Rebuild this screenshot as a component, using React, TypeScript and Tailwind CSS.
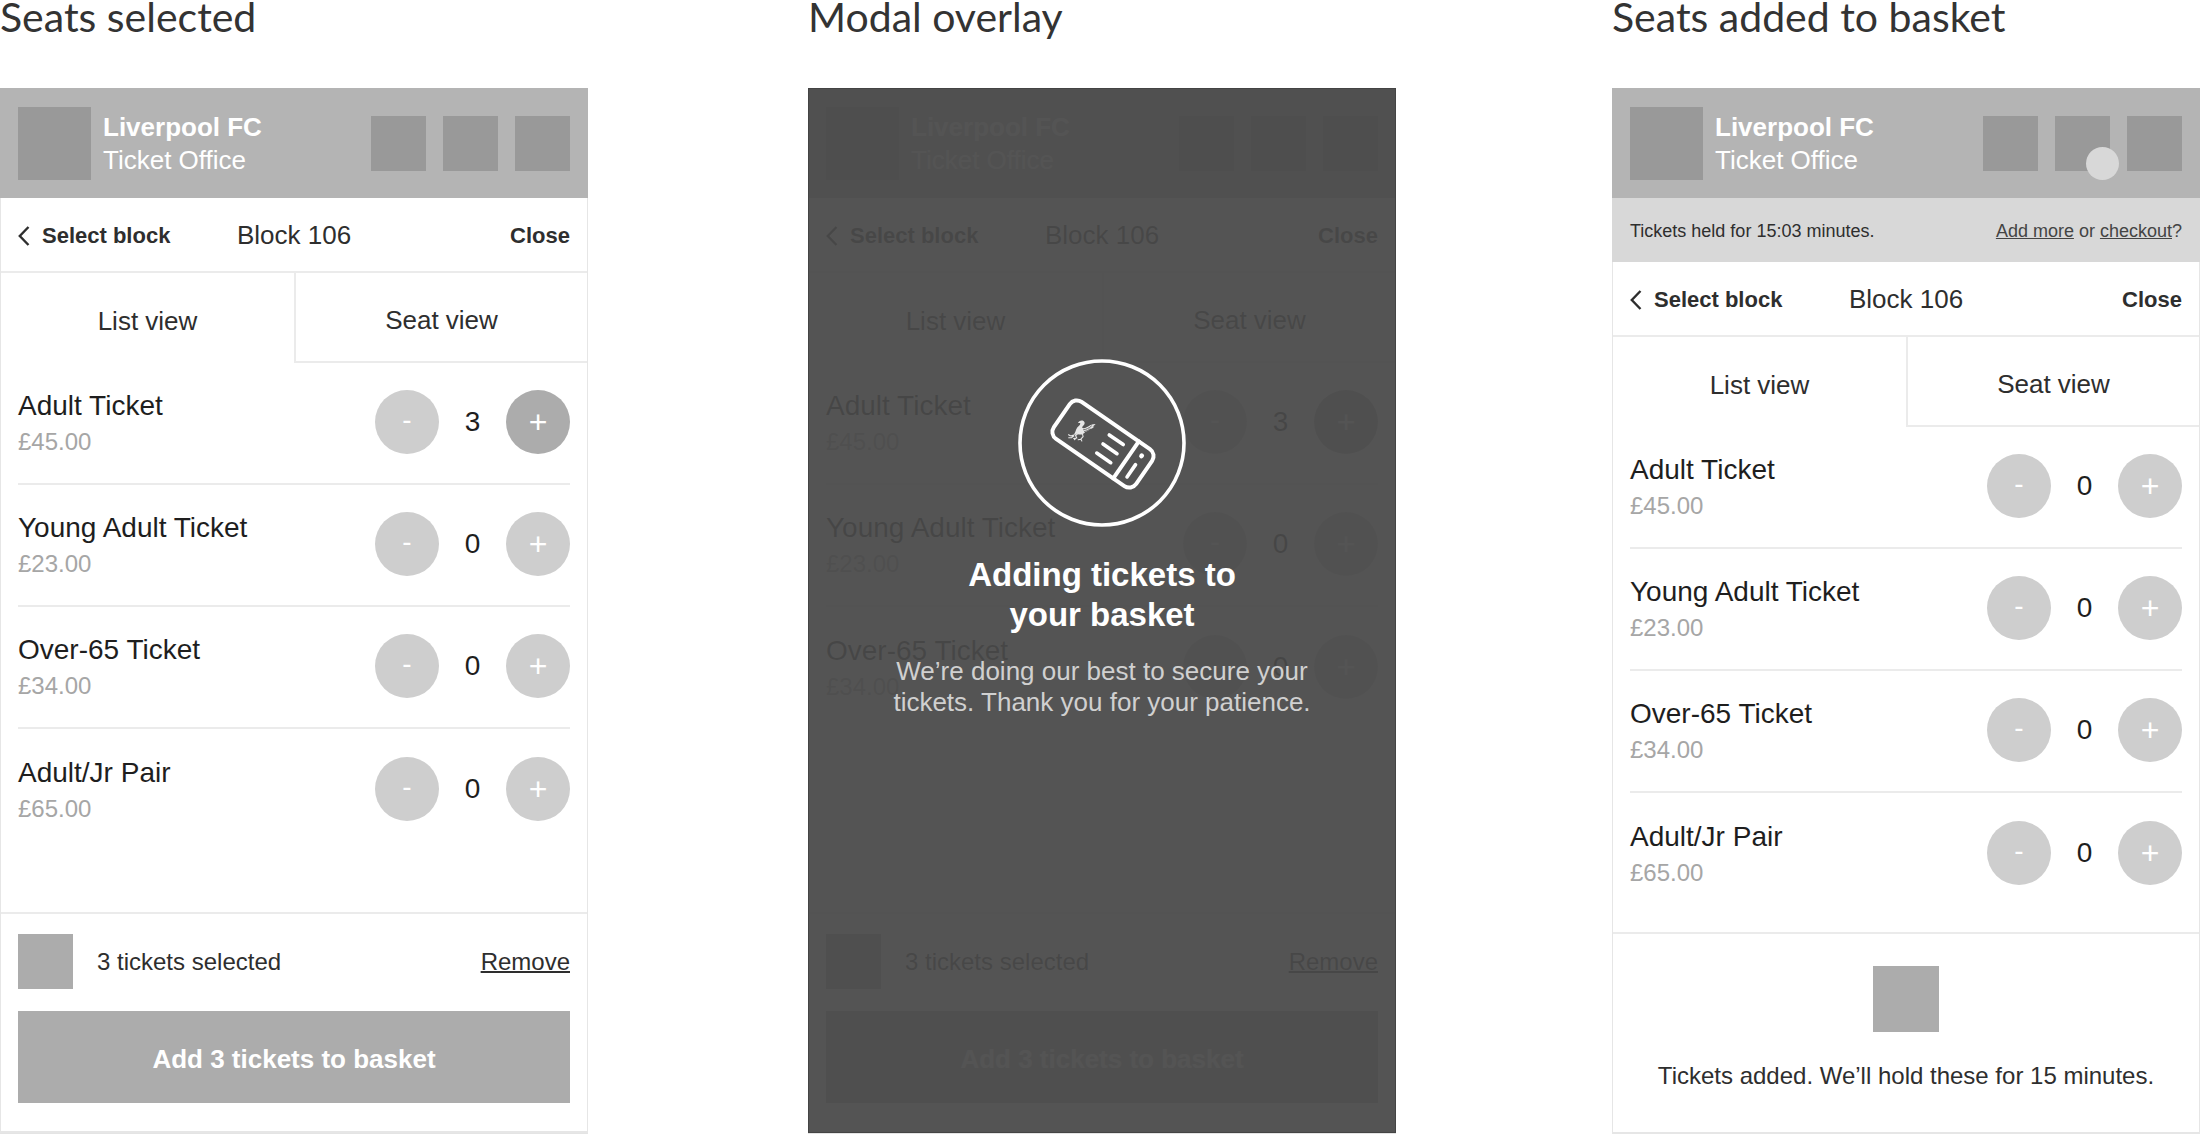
import React from 'react';

type Ticket = { name: string; price: string; count: number };

const selectedTickets: Ticket[] = [
  { name: 'Adult Ticket', price: '£45.00', count: 3 },
  { name: 'Young Adult Ticket', price: '£23.00', count: 0 },
  { name: 'Over-65 Ticket', price: '£34.00', count: 0 },
  { name: 'Adult/Jr Pair', price: '£65.00', count: 0 },
];

const emptyTickets = selectedTickets.map((t) => ({ ...t, count: 0 }));

// --- THE THREE STEPS, SIDE BY SIDE ---
export default function App() {
  return (
    <main className="grid grid-cols-[588fr_220fr_588fr_216fr_588fr] bg-white text-[#2e2e2e] font-['Liberation_Sans',Arial,sans-serif]">
      <section className="col-start-1 flex flex-col">
        <StepTitle>Seats selected</StepTitle>
        <div className="flex-1 flex flex-col border-b border-[#e4e4e4]">
          <Screen tickets={selectedTickets} footer={<SelectionFooter />} />
        </div>
      </section>

      <section className="col-start-3 flex flex-col">
        <StepTitle>Modal overlay</StepTitle>
        <div className="relative flex-1 flex flex-col border-b border-[#e4e4e4]">
          <Screen tickets={selectedTickets.slice(0, 3)} footer={<SelectionFooter />} />
          <AddingOverlay />
        </div>
      </section>

      <section className="col-start-5 flex flex-col">
        <StepTitle>Seats added to basket</StepTitle>
        <Screen tickets={emptyTickets} footer={<AddedFooter />} held />
      </section>
    </main>
  );
}

function StepTitle({ children }: { children: React.ReactNode }) {
  return <h1 className="mb-[54px] text-[41px] leading-[34px] whitespace-nowrap text-[#333] font-[Lato,sans-serif]">{children}</h1>;
}

// --- PHONE SCREEN ---
function Screen({ tickets, footer, held = false }: { tickets: Ticket[]; footer: React.ReactNode; held?: boolean }) {
  return (
    <div className="flex-1 flex flex-col">
      <Header badge={held} />
      {held && (
        <div className="h-16 px-[18px] pt-0.5 flex items-center justify-between bg-[#d8d8d8] text-lg whitespace-nowrap">
          <p>Tickets held for 15:03 minutes.</p>
          <p className="text-[#444]">
            <a href="#add" className="underline">Add more</a> or <a href="#checkout" className="underline">checkout</a>?
          </p>
        </div>
      )}

      <div className="flex-1 flex flex-col border-x border-b-2 border-[#e6e6e6]">
        <nav className="h-[75px] px-[17px] pt-0.5 grid grid-cols-3 items-center border-b-2 border-[#ebebeb] text-[22px] whitespace-nowrap">
          <button className="flex items-center gap-3 font-bold">
            <svg viewBox="0 0 12 20" className="w-3 h-5" fill="none" stroke="currentColor" strokeWidth="2.4">
              <path d="M10.5 1 1.8 10l8.7 9" />
            </svg>
            Select block
          </button>
          <h2 className="text-center text-[26px]">Block 106</h2>
          <button className="justify-self-end font-bold">Close</button>
        </nav>

        <div className="h-[90px] grid grid-cols-2 text-[26px]">
          <button className="pt-1.5">List view</button>
          <button className="pt-1.5 border-l-2 border-b-2 border-[#ebebeb]">Seat view</button>
        </div>

        <ul className="flex-1 px-[17px] pb-[17px]">
          {tickets.map((t) => <TicketRow key={t.name} ticket={t} />)}
        </ul>

        <div className="border-t-2 border-[#ebebeb]">{footer}</div>
      </div>
    </div>
  );
}

function Header({ badge }: { badge: boolean }) {
  return (
    <header className="h-[110px] px-[18px] flex items-center bg-[#b4b4b4] text-white">
      <div className="size-[73px] bg-[#999]" />
      <div className="ml-3 pt-0.5 flex-1 text-[26px] leading-[33px] whitespace-nowrap">
        <p className="font-bold">Liverpool FC</p>
        <p>Ticket Office</p>
      </div>
      <div className="flex gap-[17px]">
        <div className="size-[55px] bg-[#999]" />
        <div className="relative size-[55px] bg-[#999]">
          {badge && <span className="absolute -right-[9px] -bottom-[9px] size-[33px] rounded-full bg-[#d8d8d8]" />}
        </div>
        <div className="size-[55px] bg-[#999]" />
      </div>
    </header>
  );
}

function TicketRow({ ticket }: { ticket: Ticket }) {
  return (
    <li className="h-[122px] pb-0.5 flex items-center justify-between border-b-2 border-[#ebebeb] last:border-b-0 text-[#1e1e1e]">
      <div className="pt-1 whitespace-nowrap">
        <p className="text-[28px] leading-9">{ticket.name}</p>
        <p className="text-2xl leading-9 text-[#a6a6a6]">{ticket.price}</p>
      </div>
      <div className="flex items-center text-[28px]">
        <button aria-label={`Remove ${ticket.name}`} className="size-16 pb-1 rounded-full bg-[#cecece] text-white">-</button>
        <span className="w-[67px] text-center">{ticket.count}</span>
        <button
          aria-label={`Add ${ticket.name}`}
          className={`size-16 rounded-full text-[32px] text-white ${ticket.count > 0 ? 'bg-[#acacac]' : 'bg-[#cecece]'}`}
        >
          +
        </button>
      </div>
    </li>
  );
}

// --- FOOTERS ---
function SelectionFooter() {
  return (
    <div className="px-[17px] pt-5 pb-7">
      <div className="flex items-center text-2xl">
        <div className="size-[55px] bg-[#acacac]" />
        <p className="ml-6 flex-1">3 tickets selected</p>
        <a href="#remove" className="underline decoration-2">Remove</a>
      </div>
      <button className="mt-[22px] pt-1 w-full h-[92px] bg-[#acacac] text-white text-[26px] font-bold">Add 3 tickets to basket</button>
    </div>
  );
}

function AddedFooter() {
  return (
    <div className="pt-8 pb-10 flex flex-col items-center">
      <div className="size-[66px] bg-[#acacac]" />
      <p className="mt-7 text-2xl whitespace-nowrap">Tickets added. We’ll hold these for 15 minutes.</p>
    </div>
  );
}

// --- MODAL ---
function AddingOverlay() {
  return (
    <div role="dialog" aria-label="Adding tickets" className="absolute inset-0 pt-[270px] flex flex-col items-center border border-[#444] bg-[#494949]/94 text-center">
      <TicketIcon />
      <h2 className="mt-7 text-[33px] leading-10 font-bold text-white">
        Adding tickets to<br />your basket
      </h2>
      <p className="mt-[21px] text-[26px] leading-[31px] whitespace-nowrap text-[#d0d0d0]">
        We’re doing our best to secure your<br />tickets. Thank you for your patience.
      </p>
    </div>
  );
}

function TicketIcon() {
  return (
    <svg viewBox="0 0 168 168" className="size-[168px] shrink-0" fill="none" stroke="#fff" strokeLinecap="round" strokeLinejoin="round">
      <circle cx="84" cy="84" r="82" strokeWidth="3.6" />
      <g transform="translate(85 85) rotate(34.6)" strokeWidth="4">
        <rect x="-50" y="-22.5" width="100" height="45" rx="8.5" />
        <path d="M28-22.5v45" />
        <path d="M0-11h17M0 0h17M0 11h17M38.5-1.5v15" strokeWidth="3.6" />
        <path d="M38.5-12.5v.6" strokeWidth="4.6" />
      </g>
      {/* liver bird */}
      <g transform="translate(50 60.5)" stroke="#e6e6e6" strokeWidth="1.1">
        <path d="M10 3.6c.8-2 2.6-3 4.600-2.500 2 .6 2.700 2.600 1.500 4.200-.8 1.100-2.100 1.700-1.900 3 1.300.9 2.800.3 4.400-.6 2.600-1.500 5.600-3.400 9-3.300-.9 1.300-1.900 1.900-3.100 2.400.8.200 1.200.2 1.800.1-1.200 1.600-2.600 2.300-4 2.600-1.500 1.700-3.200 2.400-5 2.700-1.100 1.900-2.800 2.800-5 2.800-1.700.2-2.500-.6-3.300-1-.8 1-2 1.500-3.200 1.300 1-1.400 1.600-2.900 2.100-4.500.5-2.200 2-3.600 3.400-4.900.9-.9 1.300-1.800.7-2.300-.6-.3-1.200-.1-2 0z" fill="#e6e6e6" stroke="none" />
        <path d="M10.500 13.500 7.500 16l1.300 2.500-3.200.5M8 18.800l-1.600 1.400M14.500 14.500l.6 2.600-2.300 2.600-2.600.6M13 19.800l.8 1.700M5.500 15.500c-1 .8-2 1.100-3.300.8L.600 15.200M6 16.300l-2.300 1.800-3 .2" />
        <path d="M15.500 10.300c2.600-.2 5.500-1.600 8-3.800M16.500 12c2-.3 4-1.200 5.500-2.700" stroke="#555" strokeWidth=".8" />
      </g>
    </svg>
  );
}
